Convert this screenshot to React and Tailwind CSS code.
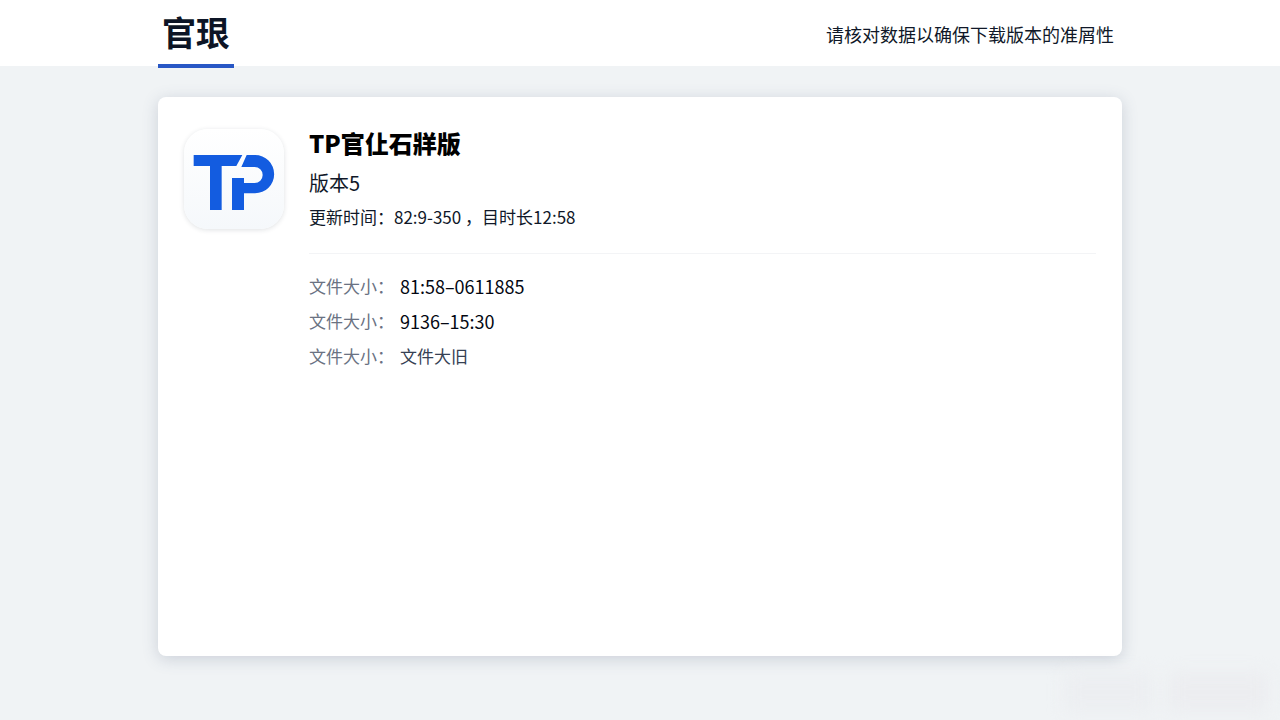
const details = [
  { label: "文件大小：", value: "81:58–0611885", valueClass: "text-lg text-gray-950" },
  { label: "文件大小：", value: "9136–15:30", valueClass: "text-lg text-gray-950" },
  { label: "文件大小：", value: "文件大旧", valueClass: "text-[17px] text-gray-700" },
];

function AppLogo() {
  return (
    <div className="size-25 shrink-0 overflow-hidden rounded-3xl bg-linear-to-b from-white to-[#f5f8fb] shadow-[0_1px_5px_rgba(30,41,59,0.14)]">
      <svg viewBox="102 117 300 300" className="size-full" fill="#135ce0" role="img" aria-label="TP">
        <path d="M131 195H277L259 228H215V360H180V228H131Z" />
        <path d="M290 195H315A57 57 0 0 1 315 310H282V360H246V264H282V279H314A24 24 0 0 0 314 231H274Z" />
      </svg>
    </div>
  );
}

function Header() {
  return (
    <header className="bg-white">
      <div className="mx-auto flex h-[66px] w-full max-w-[964px] items-center justify-between">
        <h1 className="h-[68px] self-start border-b-4 border-[#2857c5] px-1 text-[34px] leading-16 font-bold text-[#0d1526]">
          官珢
        </h1>
        <p className="pt-0.5 pr-2 text-lg text-gray-900">请核对数据以确保下载版本的准屑性</p>
      </div>
    </header>
  );
}

export default function App() {
  return (
    <div className="relative min-h-screen overflow-hidden bg-[#f0f3f5] font-['Noto_Sans_CJK_SC',sans-serif]">
      <Header />

      <main className="mx-auto mt-[31px] mb-16 flex min-h-[559px] w-full max-w-[964px] items-start gap-[25px] rounded-lg bg-white px-[26px] py-8 shadow-[0_3px_16px_rgba(71,85,120,0.22)]">
        <AppLogo />
        <div className="min-w-0 flex-1">
          <h2 className="text-2xl leading-7 font-black text-black">TP官仩石牂版</h2>
          <p className="mt-3 text-xl leading-7 text-gray-900">版本5</p>
          <p className="mt-2 text-[17px] leading-6 text-gray-900">更新时间：82:9-350 ，目时长12:58</p>

          <dl className="mt-6 border-t border-gray-100 pt-3.5">
            {details.map((item, index) => (
              <div key={index} className="flex h-[35px] items-center gap-1.5">
                <dt className="text-[17px] text-gray-500">{item.label}</dt>
                <dd className={item.valueClass}>{item.value}</dd>
              </div>
            ))}
          </dl>
        </div>
      </main>

      {/* faded mark in the page corner */}
      <div className="absolute right-3 bottom-2 flex gap-4 blur-sm" aria-hidden="true">
        <div className="h-10 w-22 rounded-lg bg-[#eceef1]" />
        <div className="h-10 w-25 rounded-lg bg-[#ecedf0]" />
      </div>
    </div>
  );
}
